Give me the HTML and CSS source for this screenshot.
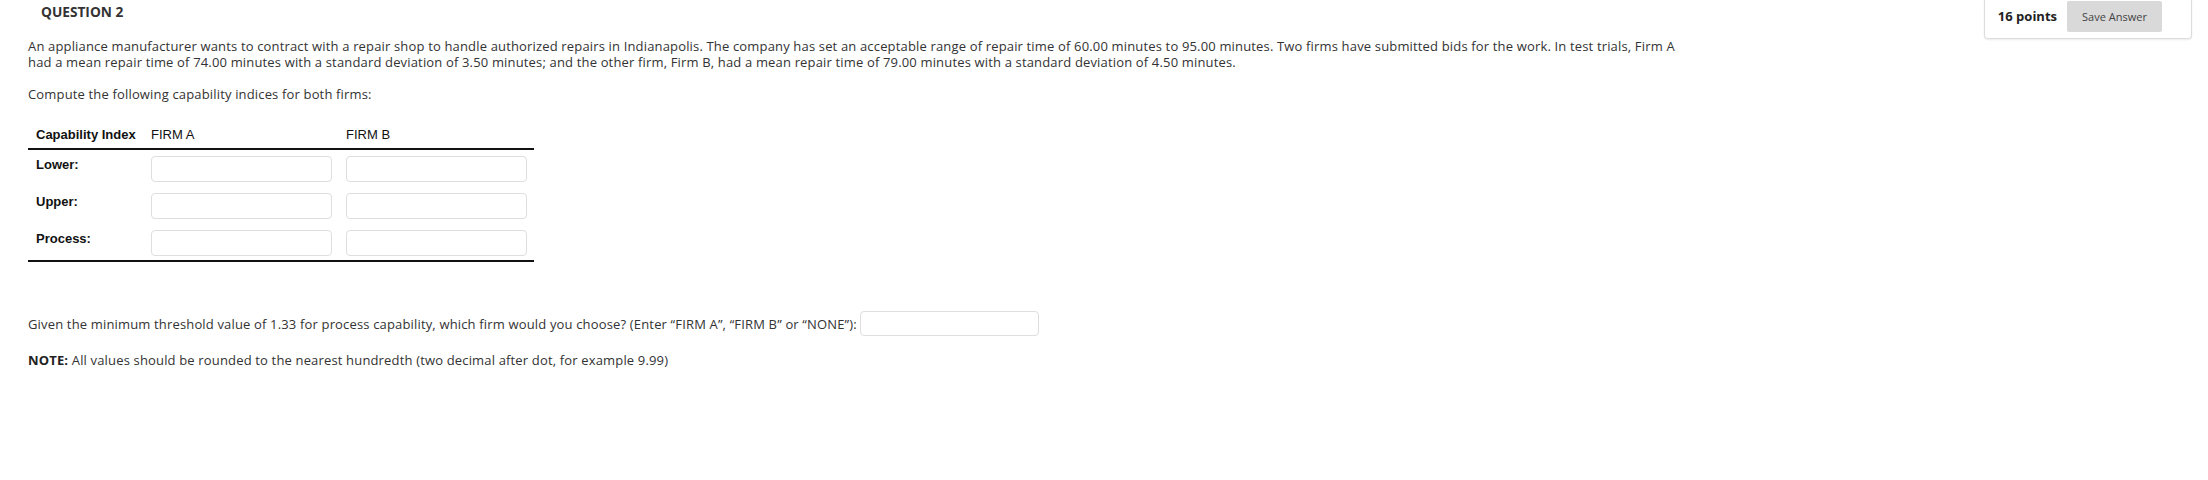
FILE: index.html
```html
<!DOCTYPE html>
<html lang="en">
<head>
<meta charset="utf-8">
<title>Question 2</title>
<link rel="stylesheet" href="styles.css">
</head>
<body>
<div class="page">
  <main class="question">
    <h3 class="question-title">QUESTION 2</h3>
    <p class="text">An appliance manufacturer wants to contract with a repair shop to handle authorized repairs in Indianapolis. The company has set an acceptable range of repair time of 60.00 minutes to 95.00 minutes. Two firms have submitted bids for the work. In test trials, Firm A had a mean repair time of 74.00 minutes with a standard deviation of 3.50 minutes; and the other firm, Firm B, had a mean repair time of 79.00 minutes with a standard deviation of 4.50 minutes.</p>
    <p class="text">Compute the following capability indices for both firms:</p>
    <table class="cap-table">
      <thead>
        <tr>
          <th class="label-col">Capability Index</th>
          <th class="firm-col">FIRM A</th>
          <th class="firm-col">FIRM B</th>
        </tr>
      </thead>
      <tbody>
        <tr>
          <td class="label-col">Lower:</td>
          <td class="firm-col"><input class="field" type="text"></td>
          <td class="firm-col"><input class="field" type="text"></td>
        </tr>
        <tr>
          <td class="label-col">Upper:</td>
          <td class="firm-col"><input class="field" type="text"></td>
          <td class="firm-col"><input class="field" type="text"></td>
        </tr>
        <tr>
          <td class="label-col">Process:</td>
          <td class="firm-col"><input class="field" type="text"></td>
          <td class="firm-col"><input class="field" type="text"></td>
        </tr>
      </tbody>
    </table>
    <div class="choose-row">
      <span class="text">Given the minimum threshold value of 1.33 for process capability, which firm would you choose? (Enter “FIRM A”, “FIRM B” or “NONE”):</span>
      <input class="field field-choice" type="text">
    </div>
    <p class="text note"><strong>NOTE:</strong> All values should be rounded to the nearest hundredth (two decimal after dot, for example 9.99)</p>
  </main>
  <aside class="points-panel">
    <span class="points">16 points</span>
    <button class="save-btn" type="button">Save Answer</button>
  </aside>
</div>
</body>
</html>
```

FILE: styles.css
```css
html, body {
  margin: 0;
  padding: 0;
  background: #ffffff;
}

body {
  font-family: "Open Sans", "Liberation Sans", sans-serif;
  color: #333333;
}

.page {
  display: flex;
  justify-content: space-between;
  align-items: flex-start;
}

.question {
  padding-left: 28px;
  width: 1662px;
}

.question-title {
  margin: 3px 0 0 13px;
  font-size: 13.7px;
  line-height: 18px;
  font-weight: 700;
  color: #333333;
}

.text {
  font-size: 13px;
  line-height: 16px;
  letter-spacing: 0.16px;
  color: #333333;
}

p.text {
  margin: 16px 0 0 0;
}

.question-title + p.text {
  margin-top: 17px;
}

.cap-table {
  margin-top: 15px;
  border-collapse: collapse;
  font-family: "Liberation Sans", Arial, sans-serif;
  font-size: 13px;
  color: #111111;
}

.cap-table th {
  text-align: left;
  padding-top: 10px;
  padding-bottom: 6px;
  border-bottom: 2px solid #111111;
  line-height: 15px;
}

.cap-table th.label-col {
  font-weight: 700;
}

.cap-table th.firm-col {
  font-weight: 400;
}

.cap-table tbody tr:last-child td {
  border-bottom: 2px solid #111111;
  padding-bottom: 4px;
}

.cap-table td {
  vertical-align: top;
  padding-top: 6px;
  padding-bottom: 5px;
  line-height: 15px;
}

.label-col {
  width: 100px;
  padding-left: 8px;
  padding-right: 8px;
  font-weight: 700;
}

.firm-col {
  padding-left: 7px;
  padding-right: 7px;
}

.cap-table td.label-col {
  padding-top: 7px;
}

.field {
  display: block;
  box-sizing: border-box;
  width: 181px;
  height: 26px;
  margin: 0;
  border: 1px solid #dedede;
  border-radius: 4px;
  background: #ffffff;
  font: inherit;
}

.choose-row {
  display: flex;
  align-items: center;
  gap: 3px;
  margin-top: 49px;
}

.field-choice {
  width: 179px;
  height: 25px;
}

.note {
  margin-top: 21px;
}

.note strong {
  font-weight: 700;
  color: #222222;
}

.points-panel {
  display: flex;
  align-items: flex-start;
  gap: 10px;
  margin-right: 16px;
  padding: 1px 29px 6px 13px;
  border: 1px solid #dcdcdc;
  border-top: none;
  border-radius: 0 0 4px 4px;
  box-shadow: 0 1px 2px rgba(0, 0, 0, 0.08);
  background: #ffffff;
}

.points {
  font-size: 13px;
  font-weight: 700;
  line-height: 31px;
  color: #222222;
}

.save-btn {
  height: 31px;
  width: 95px;
  padding: 0;
  border: none;
  border-radius: 2px;
  background: #d9d9d9;
  font-family: "Open Sans", "Liberation Sans", sans-serif;
  font-size: 11px;
  color: #444444;
}
```
